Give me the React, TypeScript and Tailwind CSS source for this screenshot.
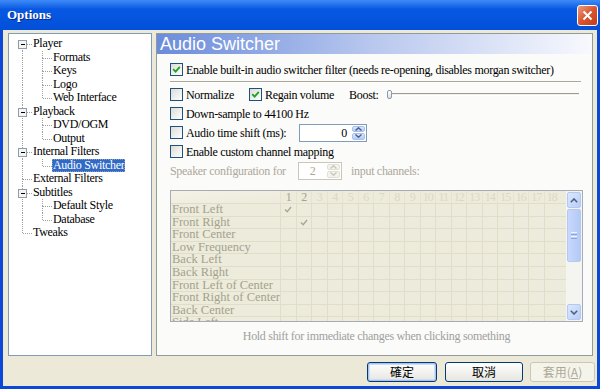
import React from 'react';

type Node = { t: string; l: 0 | 1; exp?: boolean; first?: boolean; last?: boolean; sel?: boolean };

const tree: Node[] = [
  { t: 'Player', l: 0, exp: true, first: true },
  { t: 'Formats', l: 1 },
  { t: 'Keys', l: 1 },
  { t: 'Logo', l: 1 },
  { t: 'Web Interface', l: 1, last: true },
  { t: 'Playback', l: 0, exp: true },
  { t: 'DVD/OGM', l: 1 },
  { t: 'Output', l: 1, last: true },
  { t: 'Internal Filters', l: 0, exp: true },
  { t: 'Audio Switcher', l: 1, last: true, sel: true },
  { t: 'External Filters', l: 0 },
  { t: 'Subtitles', l: 0, exp: true },
  { t: 'Default Style', l: 1 },
  { t: 'Database', l: 1, last: true },
  { t: 'Tweaks', l: 0, last: true },
];

const channels = [
  'Front Left',
  'Front Right',
  'Front Center',
  'Low Frequency',
  'Back Left',
  'Back Right',
  'Front Left of Center',
  'Front Right of Center',
  'Back Center',
  'Side Left',
];

const cols = Array.from({ length: 18 }, (_, i) => i + 1);

// dotted tree connector cell, 20 x 13.5
function Gutter({ top, bottom, branch, box }: { top: boolean; bottom: boolean; branch: boolean; box?: boolean }) {
  return (
    <svg width="20" height="13.5" viewBox="0 0 20 13.5" className="shrink-0" shapeRendering="crispEdges">
      <g stroke="#a0a0a0" strokeWidth="1" strokeDasharray="1 1" fill="none">
        {top && <line x1="10.5" y1="0" x2="10.5" y2="7" />}
        {bottom && <line x1="10.5" y1="7" x2="10.5" y2="13.5" />}
        {branch && <line x1="10.5" y1="7.5" x2="20" y2="7.5" />}
      </g>
      {box && (
        <g>
          <rect x="6.5" y="3.5" width="8" height="8" fill="#f4f4f0" stroke="#8d9cb2" />
          <line x1="8.5" y1="7.5" x2="13" y2="7.5" stroke="#000" />
        </g>
      )}
    </svg>
  );
}

function Check({ on }: { on?: boolean }) {
  return (
    <span className="w-[13px] h-[13px] border border-[#1c5180] bg-gradient-to-br from-[#dcdcd7] to-white flex items-center justify-center shrink-0">
      {on && (
        <svg width="9" height="9" viewBox="0 0 9 9">
          <path d="M1.2 4.2 L3.6 6.6 L7.8 1.8" stroke="#21a121" strokeWidth="1.8" fill="none" />
        </svg>
      )}
    </span>
  );
}

function Spin({ value, w, disabled }: { value: string; w: string; disabled?: boolean }) {
  return (
    <span
      className={`${w} h-[18px] border ${disabled ? 'border-[#c9c7ba] text-[#aca899]' : 'border-[#7f9db9] text-black'} bg-white flex items-center`}
    >
      <span className={`flex-1 ${disabled ? 'text-center' : 'text-right pr-[4px]'}`}>{value}</span>
      <span className="w-[15px] h-full flex flex-col p-[1px] gap-[1px]">
        <span
          className={`flex-1 rounded-[2px] flex items-center justify-center ${disabled ? 'bg-[#f4f3ee] border border-[#e2e0d4]' : 'bg-gradient-to-b from-[#dce6fb] to-[#b6ccf6] border border-[#a9c0ee]'}`}
        >
          <svg width="7" height="4" viewBox="0 0 7 4">
            <path d="M0.5 3.5 L3.5 0.8 L6.5 3.5" stroke={disabled ? '#c9c7ba' : '#4d6185'} strokeWidth="1.4" fill="none" />
          </svg>
        </span>
        <span
          className={`flex-1 rounded-[2px] flex items-center justify-center ${disabled ? 'bg-[#f4f3ee] border border-[#e2e0d4]' : 'bg-gradient-to-b from-[#dce6fb] to-[#b6ccf6] border border-[#a9c0ee]'}`}
        >
          <svg width="7" height="4" viewBox="0 0 7 4">
            <path d="M0.5 0.5 L3.5 3.2 L6.5 0.5" stroke={disabled ? '#c9c7ba' : '#4d6185'} strokeWidth="1.4" fill="none" />
          </svg>
        </span>
      </span>
    </span>
  );
}

function ScrollArrow({ up }: { up?: boolean }) {
  return (
    <span className="h-[16px] rounded-[2px] border border-[#b4c8f4] bg-gradient-to-br from-[#dde8fd] to-[#b7cdf7] flex items-center justify-center">
      <svg width="8" height="5" viewBox="0 0 8 5">
        <path d={up ? 'M0.8 4.2 L4 1 L7.2 4.2' : 'M0.8 0.8 L4 4 L7.2 0.8'} stroke="#4d6185" strokeWidth="1.6" fill="none" />
      </svg>
    </span>
  );
}

export default function App() {
  return (
    <div className="w-[600px] h-[389px] bg-[#0c48d8] flex flex-col overflow-hidden font-['Liberation_Serif',serif] text-[12px] tracking-[-0.3px] text-black">
      {/* title bar */}
      <div className="h-[30px] shrink-0 bg-gradient-to-b from-[#3d8bf7] via-[#0758e3] via-30% to-[#0350d9] flex items-center pl-[7px] pr-[2px]">
        <span className="text-white font-bold text-[13px] tracking-normal [text-shadow:1px_1px_0_#0a2a8a]">Options</span>
        <span className="ml-auto w-[21px] h-[21px] rounded-[3px] border border-white bg-gradient-to-br from-[#e99b7d] via-[#d8552f] to-[#c33c14] flex items-center justify-center">
          <svg width="11" height="11" viewBox="0 0 11 11">
            <path d="M1.5 1.5 L9.5 9.5 M9.5 1.5 L1.5 9.5" stroke="#fff" strokeWidth="2" />
          </svg>
        </span>
      </div>

      {/* body */}
      <div className="flex-1 mx-[3px] mb-[3px] bg-[#ece9d8] flex flex-col pt-[3px]">
        <div className="flex pl-[5px] gap-[4px]">
          {/* tree */}
          <div className="w-[144px] h-[323px] border border-[#7f9db9] bg-white pl-[3px] pt-[3px]">
            {tree.map((n) => (
              <div key={n.t} className="h-[13.5px] flex items-center leading-[13.5px]">
                {n.l === 0 ? (
                  <Gutter top={!n.first} bottom={!n.last} branch box={n.exp} />
                ) : (
                  <>
                    <Gutter top bottom branch={false} />
                    <Gutter top bottom={!n.last} branch />
                  </>
                )}
                <span
                  className={`px-[1px] whitespace-nowrap ${n.sel ? 'bg-[#316ac5] text-white outline outline-1 outline-dotted outline-[#8a9ec0] -outline-offset-1' : ''}`}
                >
                  {n.t}
                </span>
              </div>
            ))}
          </div>

          {/* page */}
          <div className="w-[437px] h-[323px] border border-[#919b9c] bg-[#fbfbf9] flex flex-col">
            <div className="h-[20px] bg-gradient-to-r from-[#6b8bdb] via-[#b9c8ee] to-[#f8f9fd] pl-[3px] text-white font-['Liberation_Sans',sans-serif] text-[18px] tracking-normal leading-[20px]">
              Audio Switcher
            </div>

            <div className="pl-[13px] pr-[9px] flex flex-col">
              <div className="h-[19px] mt-[6px] flex items-center gap-[3px]">
                <Check on />
                <span>Enable built-in audio switcher filter (needs re-opening, disables morgan switcher)</span>
              </div>
              <div className="mt-[2px] h-[2px] border-t border-[#aca899] border-b border-b-white mr-[2px]" />

              <div className="h-[19px] mt-[2px] flex items-center">
                <Check />
                <span className="ml-[3px]">Normalize</span>
                <span className="ml-[15px]">
                  <Check on />
                </span>
                <span className="ml-[3px]">Regain volume</span>
                <span className="ml-[15px]">Boost:</span>
                <span className="flex-1 ml-[8px] mr-[4px] flex items-center">
                  <span className="w-[5px] h-[9px] rounded-[2px] border border-[#8a9cad] bg-gradient-to-b from-white to-[#dcdfe0] shrink-0" />
                  <span className="flex-1 h-[3px] border-t border-[#9d9c99] border-b border-b-white bg-[#f0efe8]" />
                </span>
              </div>

              <div className="h-[19px] flex items-center gap-[3px]">
                <Check />
                <span>Down-sample to 44100 Hz</span>
              </div>

              <div className="h-[19px] flex items-center">
                <Check />
                <span className="ml-[3px] w-[113px]">Audio time shift (ms):</span>
                <Spin value="0" w="w-[68px]" />
              </div>

              <div className="h-[19px] flex items-center gap-[3px]">
                <Check />
                <span>Enable custom channel mapping</span>
              </div>

              <div className="h-[19px] flex items-center text-[#aca899]">
                <span className="w-[128px]">Speaker configuration for</span>
                <Spin value="2" w="w-[44px]" disabled />
                <span className="ml-[9px]">input channels:</span>
              </div>

              {/* channel grid */}
              <div className="mt-[10px] w-[413px] h-[132px] border border-[#a5acb5] bg-[#edebdb] flex overflow-hidden text-[#a3a28d] text-[12.5px] tracking-normal">
                <div className="flex-1 flex flex-col">
                  <div className="h-[13px] flex border-b border-[#e0ddc9] shrink-0">
                    <span className="w-[109px] shrink-0 bg-gradient-to-br from-[#f4f2e6] to-[#edebdb]" />
                    {cols.map((c) => (
                      <span
                        key={c}
                        className={`w-[15.5px] shrink-0 text-center text-[12px] leading-[13px] tracking-[-1px] border-l border-[#e6e3d0] ${c <= 2 ? 'text-[#a3a28d]' : 'text-[#dcd9c3]'}`}
                      >
                        {c}
                      </span>
                    ))}
                  </div>
                  {channels.map((ch, r) => (
                    <div key={ch} className="h-[12.6px] flex border-b border-[#e0ddc9] shrink-0">
                      <span className="w-[109px] shrink-0 pl-[1px] leading-[11.6px] whitespace-nowrap">{ch}</span>
                      {cols.map((c) => (
                        <span key={c} className="w-[15.5px] shrink-0 border-l border-[#e0ddc9] flex items-center justify-center">
                          {r === c - 1 && r < 2 && (
                            <svg width="8" height="7" viewBox="0 0 8 7">
                              <path d="M1 3.5 L3.2 5.8 L7 1" stroke="#a8a795" strokeWidth="1.4" fill="none" />
                            </svg>
                          )}
                        </span>
                      ))}
                    </div>
                  ))}
                </div>

                {/* scrollbar */}
                <div className="w-[16px] shrink-0 bg-[#f4f4f0] flex flex-col p-[1px] gap-[1px]">
                  <ScrollArrow up />
                  <span className="h-[53px] rounded-[2px] border border-[#b4c8f4] bg-gradient-to-r from-[#c9d8fc] to-[#b3c9f6] flex flex-col items-center justify-center gap-[1px]">
                    <span className="w-[6px] h-[1px] bg-[#eef3fe]" />
                    <span className="w-[6px] h-[1px] bg-[#8ca5dd]" />
                    <span className="w-[6px] h-[1px] bg-[#eef3fe]" />
                    <span className="w-[6px] h-[1px] bg-[#8ca5dd]" />
                  </span>
                  <span className="flex-1" />
                  <ScrollArrow />
                </div>
              </div>

              <div className="mt-[7px] text-center text-[#a0a0a0] leading-[14px]">
                Hold shift for immediate changes when clicking something
              </div>
            </div>
          </div>
        </div>

        {/* buttons */}
        <div className="mt-[6px] flex justify-end pr-[2px] font-['Noto_Sans_CJK_TC',sans-serif] tracking-normal text-[12px]">
          <span className="w-[70px] h-[20px] rounded-[3px] border border-[#003c74] bg-gradient-to-b from-white to-[#e6e5df] shadow-[inset_0_0_0_1px_#a8c3ee,inset_0_0_0_2px_#cfdcf5] flex items-center justify-center">
            確定
          </span>
          <span className="ml-[8px] w-[78px] h-[20px] rounded-[3px] border border-[#003c74] bg-gradient-to-b from-white to-[#e6e5df] flex items-center justify-center">
            取消
          </span>
          <span className="ml-[7px] w-[65px] h-[20px] rounded-[3px] border border-[#c9c7ba] bg-[#f5f4ea] text-[#aca899] flex items-center justify-center">
            套用(<span className="underline">A</span>)
          </span>
        </div>
      </div>
    </div>
  );
}
